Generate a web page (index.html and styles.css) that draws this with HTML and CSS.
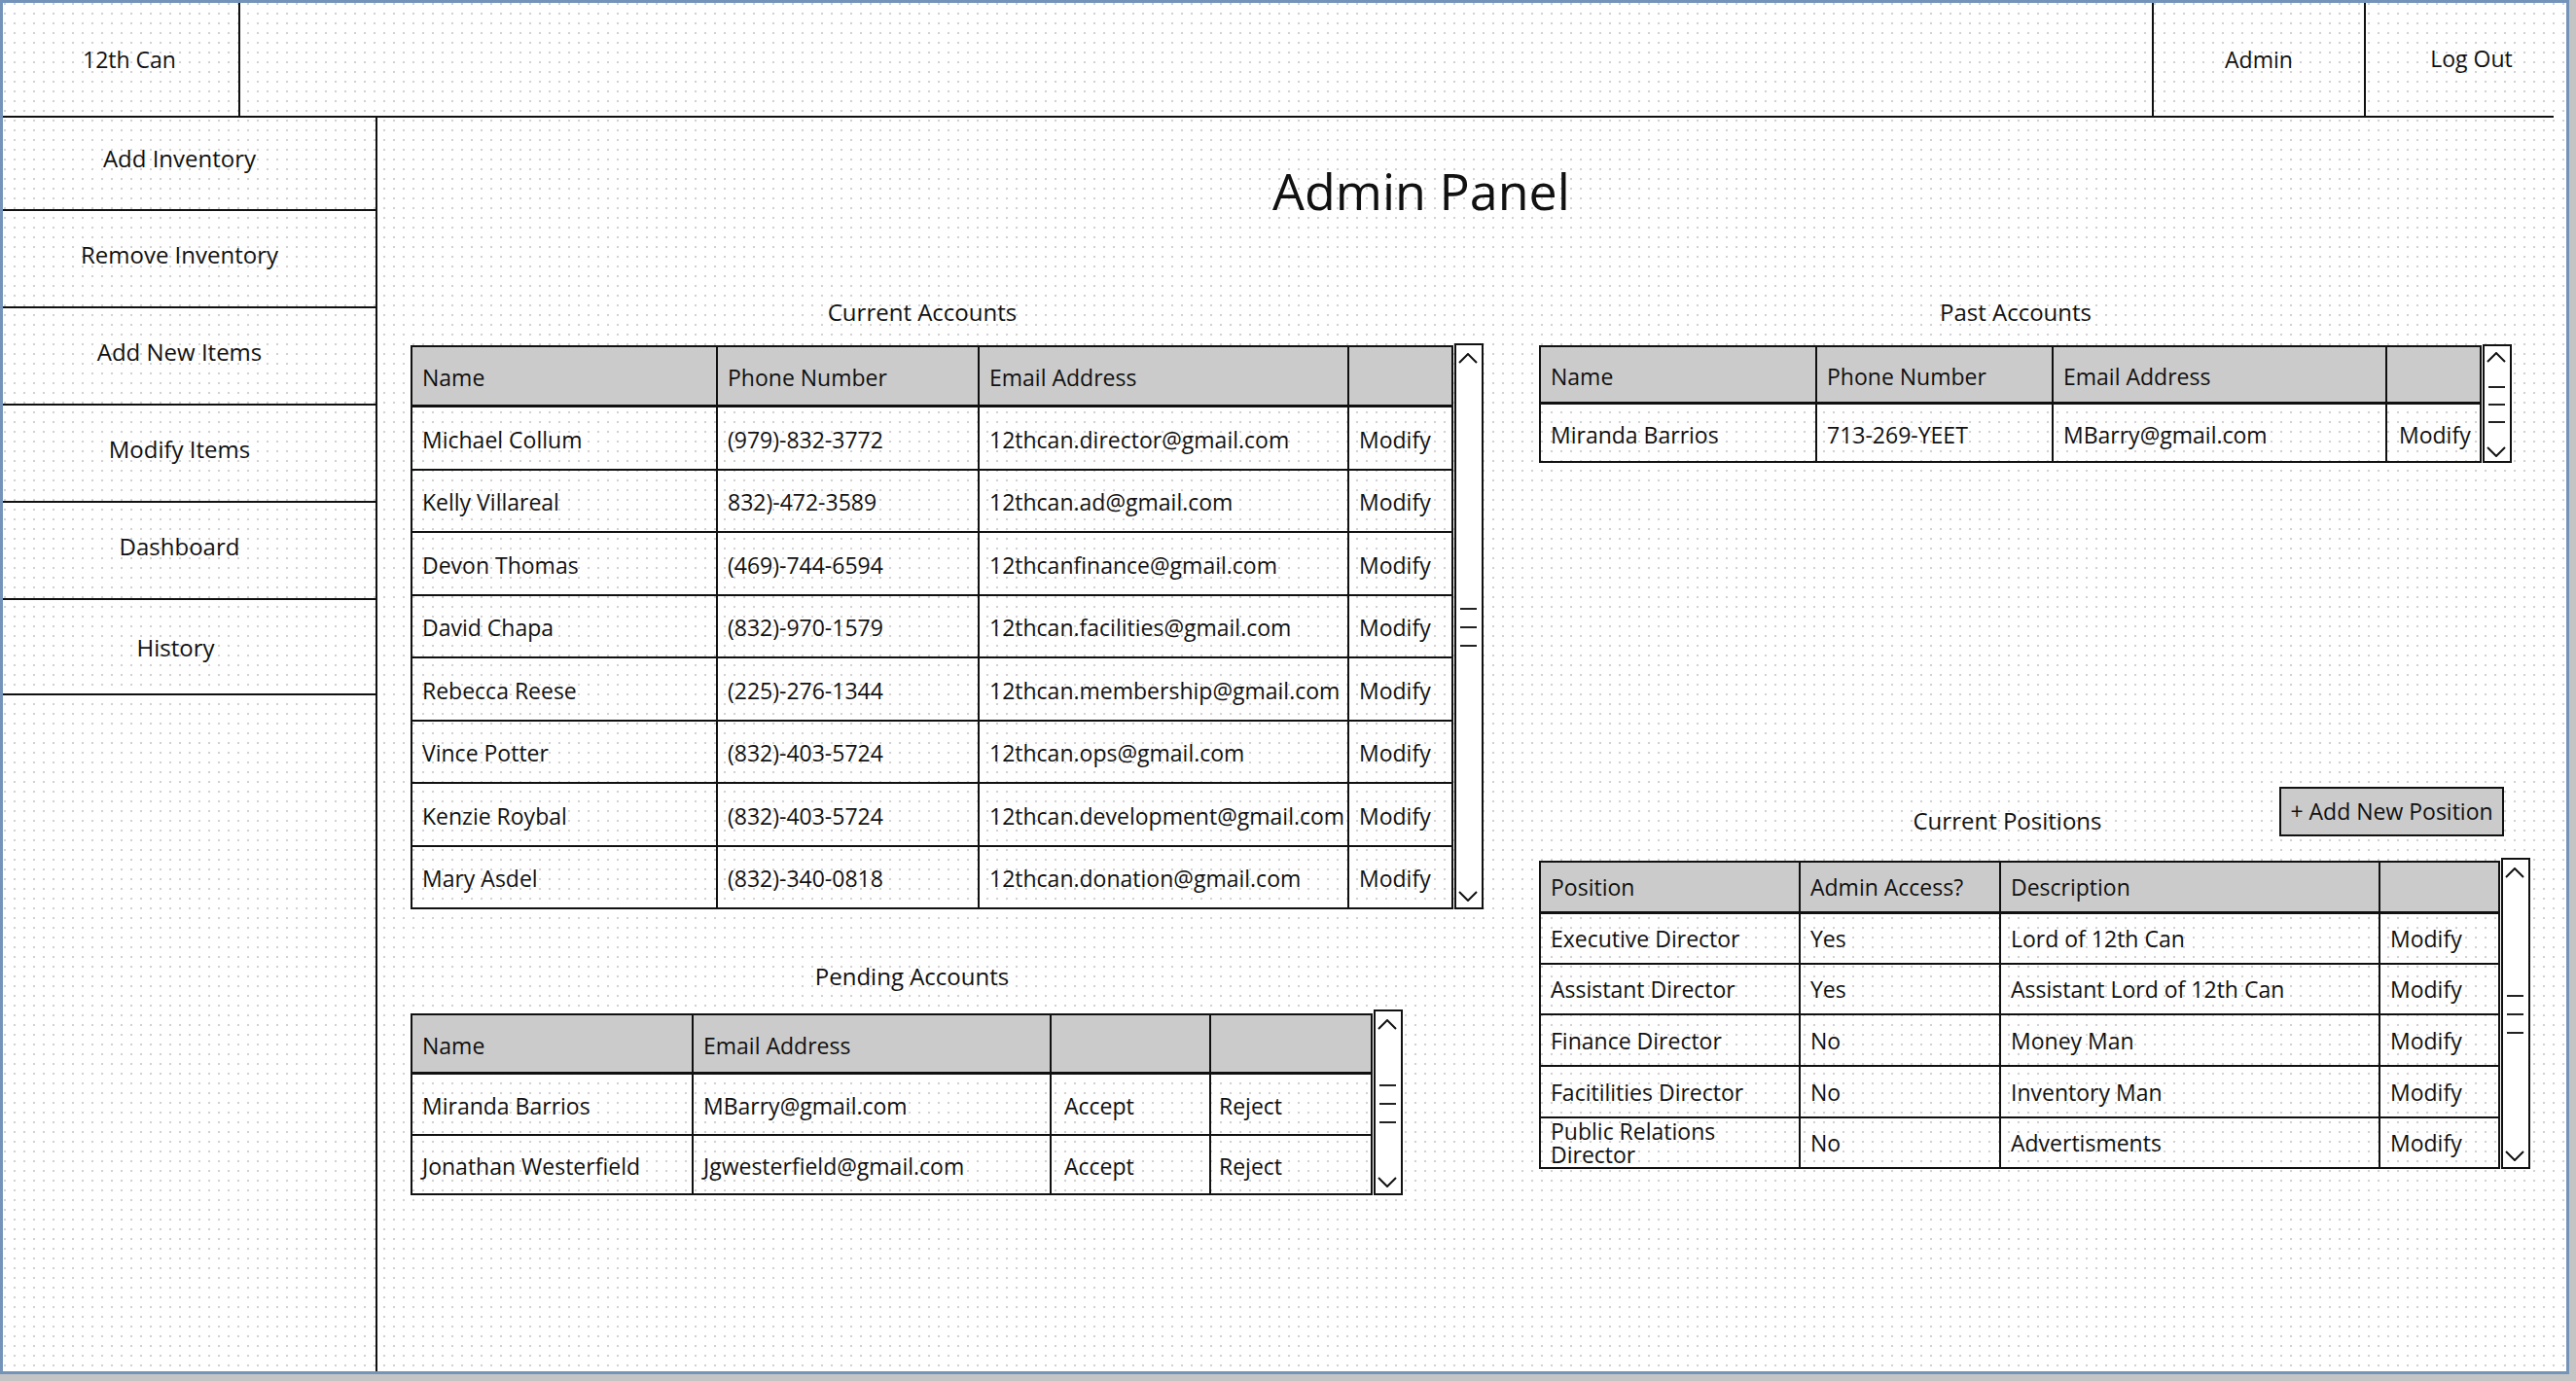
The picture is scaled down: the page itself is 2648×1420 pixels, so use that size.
FILE: index.html
```html
<!DOCTYPE html>
<html lang="en">
<head>
<meta charset="utf-8">
<title>12th Can – Admin Panel</title>
<link rel="stylesheet" href="styles.css">
</head>
<body>
<div class="frame">
  <header class="topbar">
    <div class="brand">12th Can</div>
    <div class="spacer"></div>
    <div class="tab tab-admin">Admin</div>
    <div class="tab tab-logout">Log Out</div>
  </header>

  <nav class="sidebar">
    <div class="nav-item nav-first">Add Inventory</div>
    <div class="nav-item">Remove Inventory</div>
    <div class="nav-item">Add New Items</div>
    <div class="nav-item">Modify Items</div>
    <div class="nav-item">Dashboard</div>
    <div class="nav-item nav-last">History</div>
  </nav>

  <main class="main">
    <h1 class="title">Admin Panel</h1>
    <div class="columns">
      <div class="col">
        <section class="block">
          <div class="label label-current">Current Accounts</div>
          <div class="wrap">
            <div class="grid g-current">
              <div class="c h">Name</div><div class="c h">Phone Number</div><div class="c h">Email Address</div><div class="c h"></div>
              <div class="c">Michael Collum</div><div class="c">(979)-832-3772</div><div class="c">12thcan.director@gmail.com</div><div class="c">Modify</div>
              <div class="c">Kelly Villareal</div><div class="c">832)-472-3589</div><div class="c">12thcan.ad@gmail.com</div><div class="c">Modify</div>
              <div class="c">Devon Thomas</div><div class="c">(469)-744-6594</div><div class="c">12thcanfinance@gmail.com</div><div class="c">Modify</div>
              <div class="c">David Chapa</div><div class="c">(832)-970-1579</div><div class="c">12thcan.facilities@gmail.com</div><div class="c">Modify</div>
              <div class="c">Rebecca Reese</div><div class="c">(225)-276-1344</div><div class="c">12thcan.membership@gmail.com</div><div class="c">Modify</div>
              <div class="c">Vince Potter</div><div class="c">(832)-403-5724</div><div class="c">12thcan.ops@gmail.com</div><div class="c">Modify</div>
              <div class="c">Kenzie Roybal</div><div class="c">(832)-403-5724</div><div class="c">12thcan.development@gmail.com</div><div class="c">Modify</div>
              <div class="c">Mary Asdel</div><div class="c">(832)-340-0818</div><div class="c">12thcan.donation@gmail.com</div><div class="c">Modify</div>
            </div>
            <div class="scroll">
              <svg class="chev" viewBox="0 0 20 11"><polyline points="1,10 10,1 19,10"/></svg>
              <div class="thumb"><i></i><i></i><i></i></div>
              <svg class="chev" viewBox="0 0 20 11"><polyline points="1,1 10,10 19,1"/></svg>
            </div>
          </div>
        </section>

        <section class="block block-pending">
          <div class="label label-pending">Pending Accounts</div>
          <div class="wrap">
            <div class="grid g-pending">
              <div class="c h">Name</div><div class="c h">Email Address</div><div class="c h"></div><div class="c h"></div>
              <div class="c">Miranda Barrios</div><div class="c">MBarry@gmail.com</div><div class="c c-accept">Accept</div><div class="c c-reject">Reject</div>
              <div class="c">Jonathan Westerfield</div><div class="c">Jgwesterfield@gmail.com</div><div class="c c-accept">Accept</div><div class="c c-reject">Reject</div>
            </div>
            <div class="scroll">
              <svg class="chev" viewBox="0 0 20 11"><polyline points="1,10 10,1 19,10"/></svg>
              <div class="thumb"><i></i><i></i><i></i></div>
              <svg class="chev" viewBox="0 0 20 11"><polyline points="1,1 10,10 19,1"/></svg>
            </div>
          </div>
        </section>
      </div>

      <div class="col">
        <section class="block">
          <div class="label label-past">Past Accounts</div>
          <div class="wrap">
            <div class="grid g-past">
              <div class="c h">Name</div><div class="c h">Phone Number</div><div class="c h">Email Address</div><div class="c h"></div>
              <div class="c">Miranda Barrios</div><div class="c">713-269-YEET</div><div class="c">MBarry@gmail.com</div><div class="c c-tight">Modify</div>
            </div>
            <div class="scroll scroll-small">
              <svg class="chev" viewBox="0 0 20 11"><polyline points="1,10 10,1 19,10"/></svg>
              <div class="thumb"><i></i><i></i><i></i></div>
              <svg class="chev" viewBox="0 0 20 11"><polyline points="1,1 10,10 19,1"/></svg>
            </div>
          </div>
        </section>

        <section class="block block-positions">
          <div class="pos-head">
            <div class="label label-positions">Current Positions</div>
            <button class="btn" type="button">+ Add New Position</button>
          </div>
          <div class="wrap">
            <div class="grid g-positions">
              <div class="c h">Position</div><div class="c h">Admin Access?</div><div class="c h">Description</div><div class="c h"></div>
              <div class="c">Executive Director</div><div class="c">Yes</div><div class="c">Lord of 12th Can</div><div class="c">Modify</div>
              <div class="c">Assistant Director</div><div class="c">Yes</div><div class="c">Assistant Lord of 12th Can</div><div class="c">Modify</div>
              <div class="c">Finance Director</div><div class="c">No</div><div class="c">Money Man</div><div class="c">Modify</div>
              <div class="c">Facitilities Director</div><div class="c">No</div><div class="c">Inventory Man</div><div class="c">Modify</div>
              <div class="c c-wrap">Public Relations Director</div><div class="c">No</div><div class="c">Advertisments</div><div class="c">Modify</div>
            </div>
            <div class="scroll">
              <svg class="chev" viewBox="0 0 20 11"><polyline points="1,10 10,1 19,10"/></svg>
              <div class="thumb"><i></i><i></i><i></i></div>
              <svg class="chev" viewBox="0 0 20 11"><polyline points="1,1 10,10 19,1"/></svg>
            </div>
          </div>
        </section>
      </div>
    </div>
  </main>
</div>
</body>
</html>
```

FILE: styles.css
```css
html, body {
  margin: 0;
  padding: 0;
}

body {
  background: #c4c4c4;
  font-family: "Open Sans", "DejaVu Sans", sans-serif;
  color: #111;
  width: 2648px;
  height: 1420px;
  overflow: hidden;
}

.frame {
  box-sizing: border-box;
  width: 2641px;
  height: 1413px;
  border: 3px solid #7493b9;
  background-color: #fff;
  background-image: radial-gradient(circle, #d2d2d2 1px, rgba(255,255,255,0) 1.6px);
  background-size: 10px 10px;
  background-position: 7px 6px;
  display: grid;
  grid-template-columns: 385px 1fr;
  grid-template-rows: 118px 1fr;
}

/* ---------- top bar ---------- */
.topbar {
  grid-column: 1 / -1;
  display: flex;
  box-sizing: border-box;
  height: 118px;
  margin-right: 13px;
  border-bottom: 2px solid #111;
  font-size: 23px;
}

.brand {
  box-sizing: border-box;
  width: 244px;
  border-right: 2px solid #111;
  display: flex;
  align-items: center;
  justify-content: center;
  padding-left: 18px;
}

.spacer {
  flex: 1;
}

.tab {
  box-sizing: border-box;
  border-left: 2px solid #111;
  display: flex;
  align-items: center;
  justify-content: center;
}

.tab-admin {
  width: 218px;
}

.tab-logout {
  width: 195px;
  padding-left: 24px;
  padding-bottom: 2px;
}

/* ---------- sidebar ---------- */
.sidebar {
  box-sizing: border-box;
  border-right: 2px solid #111;
  display: flex;
  flex-direction: column;
}

.nav-item {
  box-sizing: border-box;
  height: 100px;
  border-bottom: 2px solid #111;
  display: flex;
  align-items: center;
  justify-content: center;
  padding-right: 20px;
  padding-bottom: 10px;
  font-size: 24px;
}

.nav-first {
  height: 96px;
  padding-bottom: 12px;
}

.nav-last {
  height: 98px;
  padding-bottom: 0;
  padding-right: 28px;
}

/* ---------- main ---------- */
.main {
  padding-left: 34px;
}

.title {
  margin: 45px 0 0 0;
  width: 2078px;
  text-align: center;
  font-size: 52px;
  font-weight: 400;
  line-height: 60px;
}

.columns {
  display: grid;
  grid-template-columns: 1103px 1022px;
  column-gap: 57px;
  align-items: start;
  margin-top: 80px;
}

.col {
  display: flex;
  flex-direction: column;
  align-items: flex-start;
}

.block {
  width: fit-content;
}

.label {
  height: 30px;
  line-height: 30px;
  font-size: 24px;
  text-align: center;
  margin-bottom: 17px;
}

.label-current { padding-right: 51px; }
.label-pending { padding-left: 11px; margin-bottom: 19px; }
.label-past { padding-right: 20px; margin-bottom: 18px; }

.block-pending {
  margin-top: 54px;
}

.block-positions {
  margin-top: 333px;
}

.pos-head {
  display: flex;
  align-items: flex-end;
  margin-bottom: 22px;
}

.label-positions {
  flex: 1;
  margin-bottom: 1px;
  padding-left: 202px;
}

.btn {
  box-sizing: border-box;
  width: 231px;
  height: 51px;
  border: 2px solid #111;
  background: #cbcbcb;
  font-family: inherit;
  font-size: 23px;
  color: #111;
  padding: 0 0 2px 0;
  margin: 0 27px 0 0;
  white-space: nowrap;
}

.wrap {
  display: flex;
  align-items: stretch;
}

/* ---------- tables ---------- */
.grid {
  display: grid;
  border-top: 2px solid #111;
  border-left: 2px solid #111;
  margin-top: 2px;
  font-size: 23px;
}

.c {
  box-sizing: border-box;
  border-right: 2px solid #111;
  border-bottom: 2px solid #111;
  display: flex;
  align-items: center;
  padding: 3px 4px 0 10px;
  white-space: nowrap;
}

.c.h {
  background: #cbcbcb;
  border-bottom-width: 3px;
}

.c-wrap {
  white-space: normal;
  line-height: 24px;
  padding-top: 0;
}

.c-accept { padding-left: 13px; }
.c-reject { padding-left: 8px; }
.c-tight { padding-left: 12px; padding-right: 0; }

.g-current {
  grid-template-columns: 314px 269px 380px 107px;
  grid-template-rows: 62px repeat(8, 64.5px);
}

.g-pending {
  grid-template-columns: 289px 368px 164px 166px;
  grid-template-rows: 61px 63px 61px;
  margin-top: 4px;
}

.g-past {
  grid-template-columns: 284px 243px 343px 97px;
  grid-template-rows: 59px 60px;
  margin-top: 1px;
}

.g-positions {
  grid-template-columns: 267px 206px 390px 123px;
  grid-template-rows: 53px 52px 52px 53px 53px 52px;
  margin-top: 3px;
}

.g-positions .c {
  padding-top: 0;
}

/* ---------- scrollbars ---------- */
.scroll {
  box-sizing: border-box;
  width: 30px;
  border: 2px solid #111;
  background: #fff;
  display: flex;
  flex-direction: column;
  justify-content: space-between;
  align-items: flex-start;
  padding: 8px 0 6px 2px;
  margin-left: 1px;
}

.scroll-small {
  padding-top: 6px;
  padding-bottom: 4px;
}

.chev {
  width: 20px;
  height: 11px;
  display: block;
}

.chev polyline {
  fill: none;
  stroke: #111;
  stroke-width: 2;
}

.thumb {
  display: flex;
  flex-direction: column;
  gap: 17px;
  padding-left: 2px;
}

.scroll-small .thumb {
  gap: 16px;
}

.thumb i {
  display: block;
  width: 17px;
  height: 2px;
  background: #222;
}
```
